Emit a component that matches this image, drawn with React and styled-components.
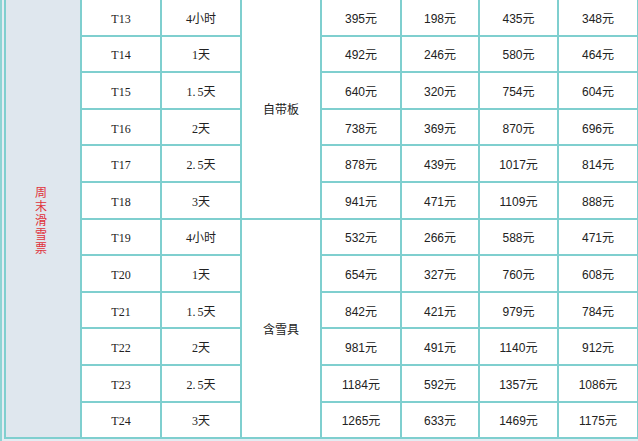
import React from "react";
import styled, { createGlobalStyle } from "styled-components";

const GlobalStyle = createGlobalStyle`
  html, body {
    margin: 0;
    padding: 0;
    background: #ffffff;
  }
  body {
    width: 638px;
    height: 441px;
    overflow: hidden;
  }
`;

const Frame = styled.div`
  width: 638px;
  height: 441px;
  overflow: hidden;
  box-sizing: border-box;
  border-left: 2px solid #8ed4d4;
  padding-left: 2px;
  background: #e4ecf2;
`;

const Table = styled.table`
  width: 633px;
  margin-top: -2px;
  border-collapse: collapse;
  table-layout: fixed;
  background: #ffffff;
`;

const Cell = styled.td`
  height: 36.6px;
  padding: 3px 0 0;
  box-sizing: border-box;
  border: 2px solid #7fcfcf;
  background: ${(p) => (p.$shade ? "#dfe7ee" : "#ffffff")};
  color: #222222;
  text-align: center;
  vertical-align: middle;
  font-family: ${(p) =>
    p.$serif
      ? '"Liberation Serif", "Noto Sans CJK SC", serif'
      : '"Liberation Sans", "Noto Sans CJK SC", sans-serif'};
  font-size: 12px;
  line-height: 14px;
  white-space: nowrap;
`;

const Dot = styled.span`
  margin-right: 2px;
`;

const VerticalLabel = styled.div`
  width: 12px;
  margin: 0 auto;
  padding-right: 4px;
  color: #e0313a;
  font-family: "Noto Sans CJK SC", sans-serif;
  font-size: 12px;
  line-height: 14px;
  white-space: normal;
  word-break: break-all;
`;

const rows = [
  ["T13", "4小时", 395, 198, 435, 348],
  ["T14", "1天", 492, 246, 580, 464],
  ["T15", "1.5天", 640, 320, 754, 604],
  ["T16", "2天", 738, 369, 870, 696],
  ["T17", "2.5天", 878, 439, 1017, 814],
  ["T18", "3天", 941, 471, 1109, 888],
  ["T19", "4小时", 532, 266, 588, 471],
  ["T20", "1天", 654, 327, 760, 608],
  ["T21", "1.5天", 842, 421, 979, 784],
  ["T22", "2天", 981, 491, 1140, 912],
  ["T23", "2.5天", 1184, 592, 1357, 1086],
  ["T24", "3天", 1265, 633, 1469, 1175],
];

const widths = [76, 80, 80, 80, 80, 78, 79, 80];

// "1.5天" is shown with a gap after the dot in the original
const renderDuration = (d) => {
  const idx = d.indexOf(".");
  if (idx < 0) return d;
  return (
    <>
      {d.slice(0, idx)}
      <Dot>.</Dot>
      {d.slice(idx + 1)}
    </>
  );
};

export default function App() {
  return (
    <>
      <GlobalStyle />
      <Frame>
        <Table>
          <colgroup>
            {widths.map((w, i) => (
              <col key={i} style={{ width: w }} />
            ))}
          </colgroup>
          <tbody>
            {rows.map((r, i) => (
              <tr key={r[0]}>
                {i === 0 && (
                  <Cell rowSpan={12} $shade>
                    <VerticalLabel>周末滑雪票</VerticalLabel>
                  </Cell>
                )}
                <Cell $serif>{r[0]}</Cell>
                <Cell $serif>{renderDuration(r[1])}</Cell>
                {i === 0 && <Cell rowSpan={6}>自带板</Cell>}
                {i === 6 && <Cell rowSpan={6}>含雪具</Cell>}
                {r.slice(2).map((p, j) => (
                  <Cell key={j}>{p}元</Cell>
                ))}
              </tr>
            ))}
          </tbody>
        </Table>
      </Frame>
    </>
  );
}
